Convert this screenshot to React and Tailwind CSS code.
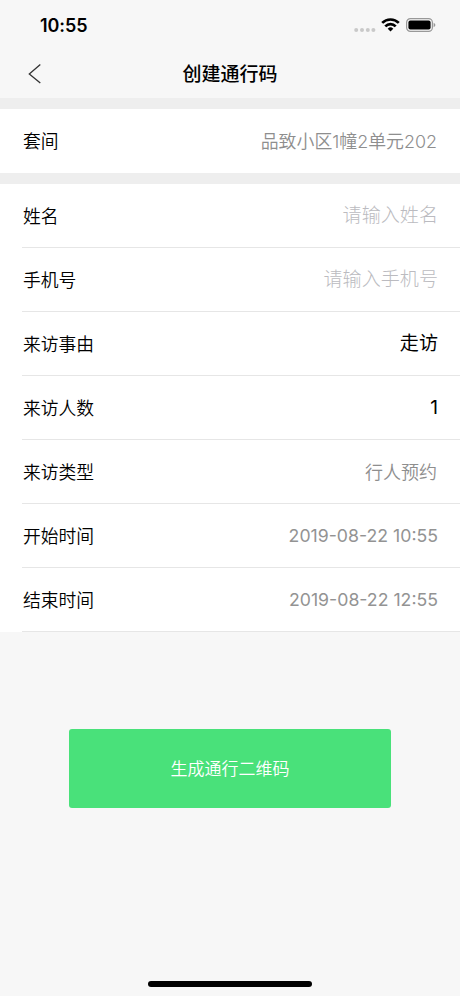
const rows = [
  { label: "姓名", placeholder: "请输入姓名" },
  { label: "手机号", placeholder: "请输入手机号" },
  { label: "来访事由", input: "走访" },
  { label: "来访人数", input: "1" },
  { label: "来访类型", value: "行人预约" },
  { label: "开始时间", date: "2019-08-22 10:55" },
  { label: "结束时间", date: "2019-08-22 12:55" },
];

function StatusBar() {
  return (
    <div className="flex h-[50px] items-center justify-between pr-[24px] pl-[40px]">
      <span className="pt-[2px] text-[18px] leading-6 font-semibold tracking-[-0.1px]">10:55</span>
      <div className="flex items-center">
        <svg width="22" height="6" viewBox="0 0 22 6" className="mt-[10px]" fill="#c9c9c9">
          <circle cx="2.2" cy="3" r="2" />
          <circle cx="8" cy="3" r="2" />
          <circle cx="13.8" cy="3" r="2" />
          <circle cx="19.4" cy="3" r="2" />
        </svg>
        <svg width="19" height="14" viewBox="0 0 19 14" className="ml-[5px]" fill="none" stroke="#000" strokeWidth="2.7">
          <path d="M1.2 4.9a11.8 11.8 0 0 1 16.6 0" />
          <path d="M4.3 8.4a7.2 7.2 0 0 1 10.4 0" />
          <path d="M9.5 13.4 6.7 10.7a4 4 0 0 1 5.6 0Z" fill="#000" stroke="none" />
        </svg>
        <svg width="30" height="14" viewBox="0 0 30 14" className="ml-[6px]">
          <rect x="0.6" y="0.6" width="25.8" height="12.8" rx="3.8" fill="none" stroke="#999" strokeWidth="1.2" />
          <rect x="2.4" y="2.4" width="22.2" height="9.2" rx="2" fill="#000" />
          <path d="M27.6 4.8q1.8 .7 1.8 2.2t-1.8 2.2Z" fill="#999" />
        </svg>
      </div>
    </div>
  );
}

function Header() {
  return (
    <div className="grid h-12 grid-cols-[70px_1fr_70px] items-center">
      <svg width="14" height="22" viewBox="0 0 14 22" className="ml-[28px]" fill="none" stroke="#333" strokeWidth="1.3">
        <path d="M12.3 1.4 1.3 10.9l11 9.2" />
      </svg>
      <h1 className="pt-[2px] text-center text-[19px] leading-6 font-medium">创建通行码</h1>
    </div>
  );
}

function Row({ label, placeholder, input, value, date }) {
  return (
    <div className="ml-[22px] flex h-16 items-center justify-between border-b border-[#e6e6e6] pr-[22px] pl-px">
      <span className="pt-1 text-[17.8px]">{label}</span>
      {placeholder && <span className="text-[19.1px] font-light text-[#bbbbc0]">{placeholder}</span>}
      {input && <span className="pb-px text-[19.1px] font-normal">{input}</span>}
      {value && <span className="pt-[2px] pr-px text-[18px] text-[#8e8e8e]">{value}</span>}
      {date && <span className="pt-px text-[17.7px] font-normal text-[#939393]">{date}</span>}
    </div>
  );
}

export default function App() {
  return (
    <div className="flex h-[996px] w-[460px] flex-col overflow-hidden bg-[#f7f7f7] font-['Inter','Noto_Sans_CJK_SC',sans-serif] text-black">
      <StatusBar />
      <Header />
      <div className="h-[11px] bg-[#eee]" />
      <div className="flex h-16 items-center justify-between bg-white pt-[3px] pr-[23px] pl-[23px] text-[17.8px] font-[350]">
        <span>套间</span>
        <span className="text-[17.9px] text-[#8e8e8e]">品致小区1幢2单元202</span>
      </div>
      <div className="h-[11px] bg-[#eee]" />
      <div className="bg-white font-[350]">
        {rows.map((row) => (
          <Row key={row.label} {...row} />
        ))}
      </div>
      <button className="mx-auto mt-[97px] h-[79px] w-[322px] rounded-[3px] bg-[#49e17a] pt-[3px] text-[17px] font-[350] text-white">
        生成通行二维码
      </button>
      <div className="mx-auto mt-auto mb-[9px] h-[6px] w-[164px] rounded-full bg-black" />
    </div>
  );
}
